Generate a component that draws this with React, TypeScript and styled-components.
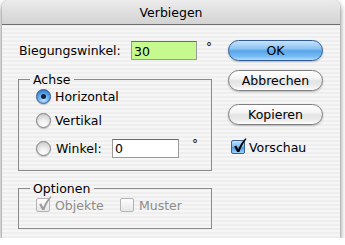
import styled, { createGlobalStyle } from 'styled-components'

const GlobalStyle = createGlobalStyle`
  html, body {
    margin: 0;
    padding: 0;
    background: #ffffff;
  }
  body {
    font-family: "DejaVu Sans", "Liberation Sans", sans-serif;
    font-size: 12px;
    color: #000;
  }
`

const Window = styled.div`
  width: 338px;
  height: 238px;
  margin-left: 2px;
  border-radius: 7px 7px 0 0;
  box-shadow: 0 3px 6px rgba(0, 0, 0, 0.55), 0 0 1px rgba(0, 0, 0, 0.5);
  overflow: hidden;
  background: repeating-linear-gradient(to bottom, #eeeeee 0 2px, #f6f6f6 2px 4px);
  display: flex;
  flex-direction: column;
`

const TitleBar = styled.div`
  height: 24px;
  border-bottom: 1px solid #6e6e6e;
  background: linear-gradient(#ececec, #d3d3d3);
  display: flex;
  align-items: center;
  justify-content: center;
  font-size: 12.5px;
  flex: none;
`

const Body = styled.div`
  display: flex;
  gap: 16px;
  padding: 0 17px 0 16px;
`

const LeftColumn = styled.div`
  width: 194px;
  padding-top: 16px;
  display: flex;
  flex-direction: column;
`

const RightColumn = styled.div`
  width: 95px;
  padding-top: 15px;
  display: flex;
  flex-direction: column;
`

const FieldRow = styled.div`
  display: flex;
  align-items: center;
  height: 19px;
  font-size: 12.5px;
`

const Label = styled.span<{ $w?: number; $disabled?: boolean }>`
  display: inline-block;
  width: ${(p) => (p.$w ? `${p.$w}px` : 'auto')};
  padding-left: 1px;
  color: ${(p) => (p.$disabled ? '#8c8c8c' : '#000')};
  white-space: nowrap;
`

const TextInput = styled.input<{ $w: number; $bg?: string }>`
  width: ${(p) => p.$w}px;
  height: 19px;
  box-sizing: border-box;
  margin: 0;
  padding: 1px 2px 0;
  border: 1px solid #9a9a9a;
  border-top-color: #6a6a6a;
  background: ${(p) => p.$bg || '#ffffff'};
  font-family: inherit;
  font-size: 12.5px;
  color: #000;
  outline: none;
`

const Degree = styled.span`
  margin-left: 9px;
  align-self: flex-start;
  margin-top: -1px;
  font-size: 12px;
`

const GroupBox = styled.fieldset<{ $mt: number; $pb: number }>`
  margin: ${(p) => p.$mt}px 0 0;
  padding: 0 0 ${(p) => p.$pb}px 17px;
  border: 1px solid #8a8a8a;
  min-inline-size: auto;

  legend {
    margin-left: -6px;
    padding: 0 4px 0 3px;
    line-height: 15px;
    font-size: 12.5px;
  }
`

const OptionRow = styled.div<{ $mt?: number; $h?: number }>`
  display: flex;
  align-items: center;
  gap: 4px;
  height: ${(p) => p.$h || 18}px;
  margin-top: ${(p) => p.$mt || 0}px;
  font-size: 12.5px;
`

const Radio = styled.span<{ $on?: boolean }>`
  position: relative;
  width: 15px;
  height: 15px;
  box-sizing: border-box;
  border-radius: 50%;
  flex: none;
  border: 1px solid ${(p) => (p.$on ? '#35598c' : '#7e7e7e')};
  background: ${(p) =>
    p.$on
      ? 'radial-gradient(circle at 50% 75%, #bfe2ff 0, #6fb4f0 40%, #3a86d8 75%, #2a67b4 100%)'
      : 'radial-gradient(circle at 50% 80%, #ffffff 0, #f0f0f0 35%, #cfcfcf 80%, #b4b4b4 100%)'};
  box-shadow: 0 1px 1px rgba(0, 0, 0, 0.2);

  &::after {
    content: '';
    display: ${(p) => (p.$on ? 'block' : 'none')};
    position: absolute;
    left: 4px;
    top: 4px;
    width: 5px;
    height: 5px;
    border-radius: 50%;
    background: #14253d;
  }
`

const Check = styled.span<{ $blue?: boolean }>`
  position: relative;
  width: 14px;
  height: 14px;
  box-sizing: border-box;
  flex: none;
  border-radius: 2px;
  border: 1px solid ${(p) => (p.$blue ? '#3d6093' : '#b4b4b4')};
  background: ${(p) =>
    p.$blue
      ? 'linear-gradient(#bfe0fb 0, #80bdf0 45%, #4f9ae3 55%, #9fd2fb 100%)'
      : 'linear-gradient(#fdfdfd, #e6e6e6)'};

  svg {
    position: absolute;
    left: 0px;
    top: -4px;
  }
`

const CheckMark = ({ color }: { color: string }) => (
  <svg width="16" height="17" viewBox="0 0 16 17">
    <path
      d="M2.2 9.6 L4.2 8.4 L6.2 12.2 C8.2 7.6 10.6 4 13.6 1.2 L14.6 2 C11.6 5.4 9.4 9.4 7.4 15 L5.2 15 Z"
      fill={color}
    />
  </svg>
)

const AquaButton = styled.button<{ $primary?: boolean; $mt: number }>`
  width: 95px;
  height: 21px;
  margin: ${(p) => p.$mt}px 0 0;
  padding: 0;
  border-radius: 11px;
  font-family: inherit;
  font-size: 12.5px;
  color: #000;
  border: 1px solid ${(p) => (p.$primary ? '#2f5a94' : '#7d7d7d')};
  background: ${(p) =>
    p.$primary
      ? 'linear-gradient(#c7e3fb 0, #8cc4f4 40%, #5aa6ea 52%, #74b9f3 80%, #b4dcff 100%)'
      : 'linear-gradient(#ffffff 0, #f4f4f4 40%, #e3e3e3 52%, #ececec 80%, #ffffff 100%)'};
  box-shadow: 0 1px 2px rgba(0, 0, 0, 0.25);
`

const PreviewRow = styled.div`
  display: flex;
  align-items: center;
  gap: 4px;
  height: 18px;
  margin-top: 13px;
  padding-left: 3px;
  font-size: 12.5px;
`

export default function App() {
  return (
    <>
      <GlobalStyle />
      <Window>
        <TitleBar>Verbiegen</TitleBar>
        <Body>
          <LeftColumn>
            <FieldRow>
              <Label $w={112}>Biegungswinkel:</Label>
              <TextInput $w={66} $bg="#c6f98e" value="30" readOnly />
              <Degree>°</Degree>
            </FieldRow>

            <GroupBox $mt={12} $pb={12}>
              <legend>Achse</legend>
              <OptionRow>
                <Radio $on />
                <span>Horizontal</span>
              </OptionRow>
              <OptionRow $mt={6}>
                <Radio />
                <span>Vertikal</span>
              </OptionRow>
              <OptionRow $mt={9} $h={20}>
                <Radio />
                <Label $w={52}>Winkel:</Label>
                <TextInput $w={67} value="0" readOnly />
                <Degree>°</Degree>
              </OptionRow>
            </GroupBox>

            <GroupBox $mt={10} $pb={14}>
              <legend>Optionen</legend>
              <OptionRow>
                <Check>
                  <CheckMark color="#9c9c9c" />
                </Check>
                <Label $w={61} $disabled>
                  Objekte
                </Label>
                <Check />
                <Label $disabled>Muster</Label>
              </OptionRow>
            </GroupBox>
          </LeftColumn>

          <RightColumn>
            <AquaButton $primary $mt={0}>
              OK
            </AquaButton>
            <AquaButton $mt={9}>Abbrechen</AquaButton>
            <AquaButton $mt={13}>Kopieren</AquaButton>
            <PreviewRow>
              <Check $blue>
                <CheckMark color="#000" />
              </Check>
              <span>Vorschau</span>
            </PreviewRow>
          </RightColumn>
        </Body>
      </Window>
    </>
  )
}
